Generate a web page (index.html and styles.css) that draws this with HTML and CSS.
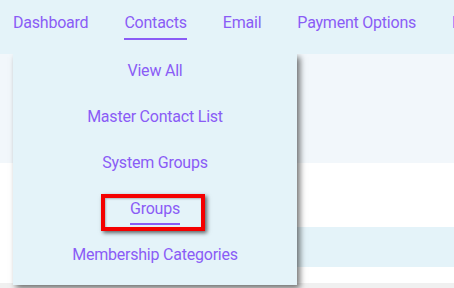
FILE: index.html
```html
<!DOCTYPE html>
<html>
<head>
<meta charset="utf-8">
<link rel="stylesheet" href="styles.css">
</head>
<body>
<div class="page">
  <nav class="nav">
    <a class="nav-link">Dashboard</a>
    <a class="nav-link active">Contacts</a>
    <a class="nav-link">Email</a>
    <a class="nav-link">Payment Options</a>
    <a class="nav-link">Reports</a>
  </nav>
  <div class="content">
    <div class="band band-grey"></div>
    <div class="band band-white"></div>
    <div class="band band-blue"></div>
    <div class="band band-white2"></div>
    <div class="band band-foot"></div>
  </div>
  <div class="dropdown">
    <div class="item"><a class="item-link">View All</a></div>
    <div class="item"><a class="item-link">Master Contact List</a></div>
    <div class="item"><a class="item-link">System Groups</a></div>
    <div class="item"><a class="item-link current">Groups</a></div>
    <div class="item"><a class="item-link">Membership Categories</a></div>
  </div>
  <div class="highlight"></div>
</div>
</body>
</html>
```
FILE: styles.css
```css
* { box-sizing: border-box; }
html, body { margin: 0; padding: 0; }
body {
  width: 454px;
  height: 288px;
  overflow: hidden;
  font-family: Roboto, "Liberation Sans", sans-serif;
  letter-spacing: -0.22px;
  background: #ffffff;
}
.page {
  position: relative;
  width: 454px;
  height: 288px;
  overflow: hidden;
}
.nav {
  position: relative;
  z-index: 3;
  height: 54px;
  background: #e4f3f9;
  display: flex;
  gap: 36px;
  padding: 13px 0 0 13px;
  white-space: nowrap;
}
.nav-link {
  display: inline-block;
  font-size: 16px;
  line-height: 20px;
  color: #8a5cf6;
  padding-bottom: 5px;
  border-bottom: 2px solid transparent;
  height: 27px;
  flex: none;
}
.nav-link.active { border-bottom-color: #8a5cf6; }
.content {
  display: flex;
  flex-direction: column;
}
.band-grey { height: 109px; background: #f2f7fb; }
.band-white { height: 64px; background: #ffffff; }
.band-blue { height: 40px; background: #e4f3f9; margin-left: 20px; }
.band-white2 { height: 16px; background: #ffffff; }
.band-foot { height: 6px; background: #f0f0f0; }
.dropdown {
  position: absolute;
  z-index: 2;
  left: 13px;
  top: 54px;
  width: 284px;
  height: 231px;
  padding-top: 1px;
  background: #e4f3f9;
  box-shadow: 3px 3px 6px rgba(0, 0, 0, 0.55);
  display: flex;
  flex-direction: column;
  align-items: center;
}
.item {
  height: 46px;
  text-align: center;
}
.item-link {
  display: inline-block;
  font-size: 16px;
  line-height: 32px;
  color: #8a5cf6;
}
.item-link.current {
  line-height: 20px;
  margin-top: 6px;
  padding-bottom: 4px;
  border-bottom: 2px solid #8a5cf6;
}
.highlight {
  position: absolute;
  z-index: 4;
  left: 101px;
  top: 194px;
  width: 104px;
  height: 37px;
  border: 4px solid #f40000;
  box-shadow: 2px 2px 4px rgba(0, 0, 0, 0.6), inset 1px 1px 2px rgba(0,0,0,0.25);
}
```
